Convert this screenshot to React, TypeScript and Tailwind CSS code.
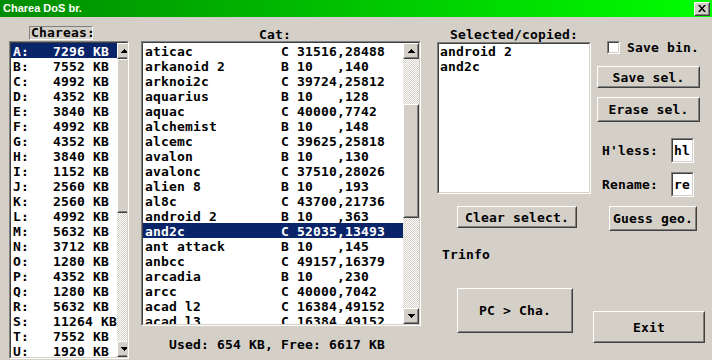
import type { ReactNode } from 'react';

const mono = "font-['DejaVu_Sans_Mono',monospace] font-bold text-[13px] tracking-[0.17px] whitespace-pre text-black";

const drives: [string, number][] = [
  ['A', 7296], ['B', 7552], ['C', 4992], ['D', 4352], ['E', 3840], ['F', 4992], ['G', 4352],
  ['H', 3840], ['I', 1152], ['J', 2560], ['K', 2560], ['L', 4992], ['M', 5632], ['N', 3712],
  ['O', 1280], ['P', 4352], ['Q', 1280], ['R', 5632], ['S', 11264], ['T', 7552], ['U', 1920],
];

const catalog: [string, string, string, string][] = [
  ['aticac', 'C', '31516', '28488'],
  ['arkanoid 2', 'B', '10', '140'],
  ['arknoi2c', 'C', '39724', '25812'],
  ['aquarius', 'B', '10', '128'],
  ['aquac', 'C', '40000', '7742'],
  ['alchemist', 'B', '10', '148'],
  ['alcemc', 'C', '39625', '25818'],
  ['avalon', 'B', '10', '130'],
  ['avalonc', 'C', '37510', '28026'],
  ['alien 8', 'B', '10', '193'],
  ['al8c', 'C', '43700', '21736'],
  ['android 2', 'B', '10', '363'],
  ['and2c', 'C', '52035', '13493'],
  ['ant attack', 'B', '10', '145'],
  ['anbcc', 'C', '49157', '16379'],
  ['arcadia', 'B', '10', '230'],
  ['arcc', 'C', '40000', '7042'],
  ['acad l2', 'C', '16384', '49152'],
  ['acad l3', 'C', '16384', '49152'],
];

// classic raised 3d edge
function Raised({ className = '', children }: { className?: string; children?: ReactNode }) {
  return (
    <div className={`border border-t-white border-l-white border-b-[#404040] border-r-[#404040] bg-[#d4d0c8] ${className}`}>
      <div className="w-full h-full border border-t-[#d4d0c8] border-l-[#d4d0c8] border-b-[#808080] border-r-[#808080] flex items-center justify-center">
        {children}
      </div>
    </div>
  );
}

// sunken edge for lists / inputs
function Sunken({ className = '', children }: { className?: string; children?: ReactNode }) {
  return (
    <div className={`border border-t-[#808080] border-l-[#808080] border-b-white border-r-white ${className}`}>
      <div className="w-full h-full border border-t-[#404040] border-l-[#404040] border-b-[#d4d0c8] border-r-[#d4d0c8] bg-white overflow-hidden">
        {children}
      </div>
    </div>
  );
}

function Arrow({ down }: { down?: boolean }) {
  return (
    <svg width="7" height="4" viewBox="0 0 7 4" className={down ? 'rotate-180' : ''}>
      <path d="M3.5 0 L7 4 L0 4 Z" fill="#000" shapeRendering="crispEdges" />
    </svg>
  );
}

const track = 'bg-[repeating-conic-gradient(#d4d0c8_0%_25%,#ffffff_0%_50%)] bg-[length:2px_2px]';

function Scrollbar({ before, thumb }: { before: number; thumb: number }) {
  return (
    <div className="w-[16px] h-full flex flex-col shrink-0">
      <Raised className="w-[16px] h-[16px] shrink-0">
        <Arrow />
      </Raised>
      <div className={`${track} shrink-0`} style={{ height: before }} />
      <Raised className="w-[16px] shrink-0">
        <div style={{ height: thumb - 4 }} />
      </Raised>
      <div className={`${track} flex-1`} />
      <Raised className="w-[16px] h-[16px] shrink-0">
        <Arrow down />
      </Raised>
    </div>
  );
}

function Btn({ label, className }: { label: string; className: string }) {
  return (
    <Raised className={className}>
      <span className={`${mono} leading-[15px]`}>{label}</span>
    </Raised>
  );
}

export default function App() {
  return (
    <div className="w-[712px] h-[360px] overflow-hidden bg-[#d4d0c8] flex flex-col leading-[15px]">
      {/* title bar */}
      <div className="h-[17px] shrink-0 flex items-center bg-gradient-to-r from-[#008c00] to-[#00ff00]">
        <span className="ml-[3px] font-['Liberation_Sans',Arial,sans-serif] font-bold text-[11px] text-white leading-none">
          Charea DoS br.
        </span>
        <Raised className="ml-auto mr-[2px] w-[16px] h-[14px]">
          <svg width="8" height="7" viewBox="0 0 8 7">
            <path d="M0 0h2l2 2.5L6 0h2L5 3.5 8 7H6L4 4.5 2 7H0l3-3.5z" fill="#000" />
          </svg>
        </Raised>
      </div>

      <div className="flex flex-1">
        {/* Chareas column */}
        <div className="ml-[9px] w-[120px] flex flex-col">
          <div className="mt-[9px] ml-[20px] w-[64px] h-[14px] border border-t-[#808080] border-l-[#808080] border-b-white border-r-white flex items-center">
            <span className={`${mono} leading-[12px] pl-[1px]`}>Chareas:</span>
          </div>
          <Sunken className="mt-[1px] h-[318px] shrink-0">
            <div className="flex h-full">
              <div className="flex-1">
                {drives.map(([l, kb], i) => (
                  <div
                    key={l}
                    className={`${mono} h-[15px] leading-[17px] pl-[2px] ${i === 0 ? 'bg-[#0a246a] text-white' : ''}`}
                  >
                    {`${l}:   ${kb} KB`}
                  </div>
                ))}
              </div>
              <Scrollbar before={0} thumb={154} />
            </div>
          </Sunken>
        </div>

        {/* Cat column */}
        <div className="ml-[12px] w-[280px] flex flex-col">
          <div className={`${mono} mt-[11px] h-[13px] leading-[13px] pl-[118px]`}>Cat:</div>
          <Sunken className="h-[285px] shrink-0">
            <div className="flex h-full">
              <div className="flex-1">
                {catalog.map(([name, t, a, b]) => {
                  const sel = name === 'and2c';
                  return (
                    <div
                      key={name}
                      className={`${mono} h-[15px] leading-[17px] pl-[2px] ${sel ? 'bg-[#0a246a] text-white' : ''}`}
                    >
                      {`${name.padEnd(17)}${t} ${a.padEnd(5)},${b}`}
                    </div>
                  );
                })}
              </div>
              <Scrollbar before={45} thumb={114} />
            </div>
          </Sunken>
          <div className={`${mono} mt-[11px] h-[15px] leading-[15px] pl-[28px]`}>Used: 654 KB, Free: 6617 KB</div>
        </div>

        {/* Selected column */}
        <div className="ml-[16px] w-[154px] flex flex-col">
          <div className={`${mono} mt-[11px] h-[14px] leading-[13px] pl-[13px]`}>Selected/copied:</div>
          <Sunken className="h-[152px] shrink-0">
            <div className="pl-[1px]">
              <div className={`${mono} h-[15px] leading-[15px]`}>android 2</div>
              <div className={`${mono} h-[15px] leading-[15px]`}>and2c</div>
            </div>
          </Sunken>
          <Btn label="Clear select." className="mt-[12px] ml-[20px] w-[120px] h-[22px]" />
          <div className={`${mono} mt-[19px] ml-[5px] h-[15px] leading-[15px]`}>Trinfo</div>
          <Btn label="PC > Cha." className="mt-[26px] ml-[20px] w-[116px] h-[45px]" />
        </div>

        {/* buttons column */}
        <div className="ml-[2px] w-[114px] flex flex-col">
          <div className="mt-[24px] ml-[14px] flex items-center h-[13px]">
            <Sunken className="w-[13px] h-[13px]" />
            <span className={`${mono} ml-[7px] leading-[13px]`}>Save bin.</span>
          </div>
          <Btn label="Save sel." className="mt-[12px] ml-[4px] w-[103px] h-[22px]" />
          <Btn label="Erase sel." className="mt-[9px] ml-[4px] w-[103px] h-[25px]" />
          <div className="mt-[16px] ml-[9px] flex items-center h-[25px]">
            <span className={`${mono} w-[69px] leading-[15px]`}>H'less:</span>
            <Sunken className="w-[23px] h-[25px]">
              <div className={`${mono} pl-[1px] leading-[21px]`}>hl</div>
            </Sunken>
          </div>
          <div className="mt-[9px] ml-[9px] flex items-center h-[25px]">
            <span className={`${mono} w-[69px] leading-[15px]`}>Rename:</span>
            <Sunken className="w-[23px] h-[25px]">
              <div className={`${mono} pl-[1px] leading-[21px]`}>re</div>
            </Sunken>
          </div>
          <Btn label="Guess geo." className="mt-[9px] ml-[16px] w-[88px] h-[25px]" />
          <Btn label="Exit" className="mt-[80px] w-[112px] h-[32px]" />
        </div>
      </div>
    </div>
  );
}
